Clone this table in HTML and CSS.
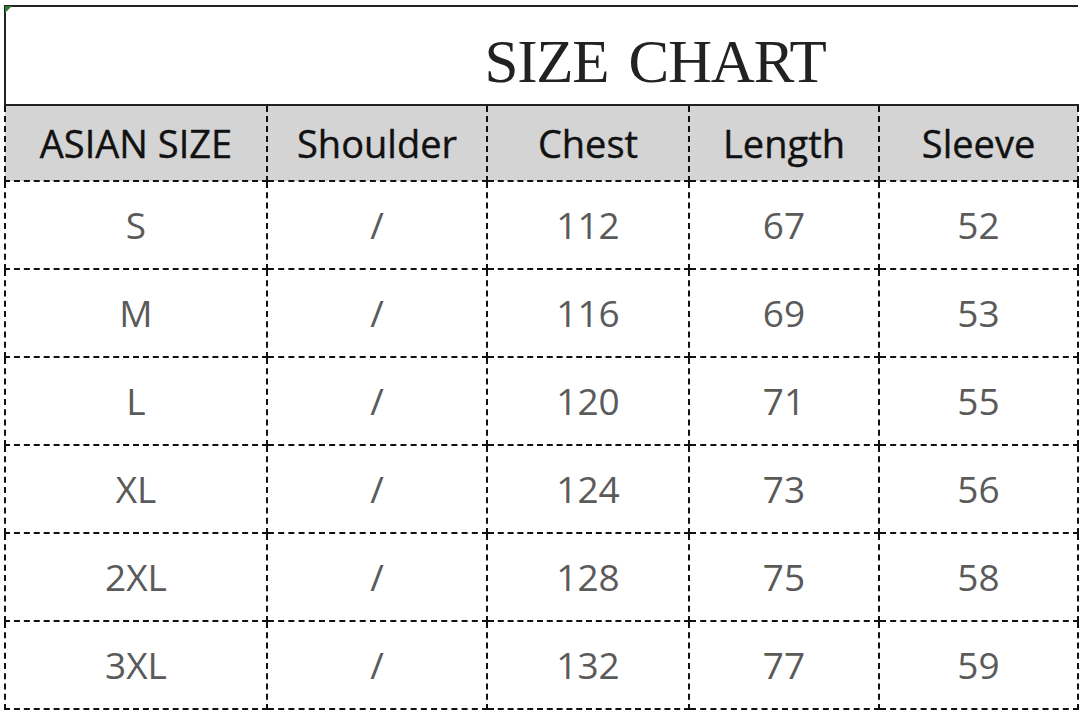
FILE: index.html
```html
<!DOCTYPE html>
<html>
<head>
<meta charset="utf-8">
<link rel="stylesheet" href="styles.css">
</head>
<body>
<div class="sheet">
  <span class="corner"></span>
  <table class="chart">
    <colgroup>
      <col class="c1"><col class="c2"><col class="c3"><col class="c4"><col class="c5">
    </colgroup>
    <tr class="title-row"><td colspan="5" class="title">SIZE CHART</td></tr>
    <tr class="head">
      <th>ASIAN SIZE</th><th>Shoulder</th><th>Chest</th><th>Length</th><th>Sleeve</th>
    </tr>
    <tr><td>S</td><td>/</td><td>112</td><td>67</td><td>52</td></tr>
    <tr><td>M</td><td>/</td><td>116</td><td>69</td><td>53</td></tr>
    <tr><td>L</td><td>/</td><td>120</td><td>71</td><td>55</td></tr>
    <tr><td>XL</td><td>/</td><td>124</td><td>73</td><td>56</td></tr>
    <tr><td>2XL</td><td>/</td><td>128</td><td>75</td><td>58</td></tr>
    <tr><td>3XL</td><td>/</td><td>132</td><td>77</td><td>59</td></tr>
  </table>
</div>
</body>
</html>
```
FILE: styles.css
```css
html, body {
  margin: 0;
  padding: 0;
  background: #ffffff;
}
body {
  width: 1080px;
  height: 712px;
  overflow: hidden;
}
.sheet {
  position: relative;
  padding: 5px 0 0 4px;
}
.corner {
  position: absolute;
  left: 5px;
  top: 6px;
  width: 0;
  height: 0;
  border-top: 7px solid #2e7d32;
  border-right: 7px solid transparent;
}
.chart {
  border-collapse: collapse;
  table-layout: fixed;
  width: 1073px;
  font-family: "Open Sans", Tahoma, sans-serif;
}
.c1 { width: 262px; }
.c2 { width: 220px; }
.c3 { width: 202px; }
.c4 { width: 190px; }
.c5 { width: 199px; }
.title-row td.title {
  height: 99px;
  box-sizing: border-box;
  border-top: 2px solid #222;
  border-left: 2px solid #222;
  border-bottom: 2px solid #222;
  border-right: none;
  padding: 12px 0 0 226px;
  line-height: 60px;
  text-align: center;
  font-family: "Liberation Serif", "Times New Roman", serif;
  font-size: 61px;
  letter-spacing: -1.2px;
  word-spacing: 6px;
  color: #222;
  vertical-align: middle;
}
.head th {
  height: 74px;
  background: #d4d4d4;
  font-weight: normal;
  font-size: 38px;
  line-height: 40px;
  color: #111;
  border: 2px dashed #111;
  border-top: 2px solid #222;
  padding: 0;
  vertical-align: middle;
  -webkit-text-stroke: 0.4px #111;
}
td {
  height: 86px;
  border: 2px dashed #111;
  text-align: center;
  vertical-align: middle;
  font-size: 37px;
  line-height: 40px;
  color: #5a5a5a;
  padding: 0;
}
```
